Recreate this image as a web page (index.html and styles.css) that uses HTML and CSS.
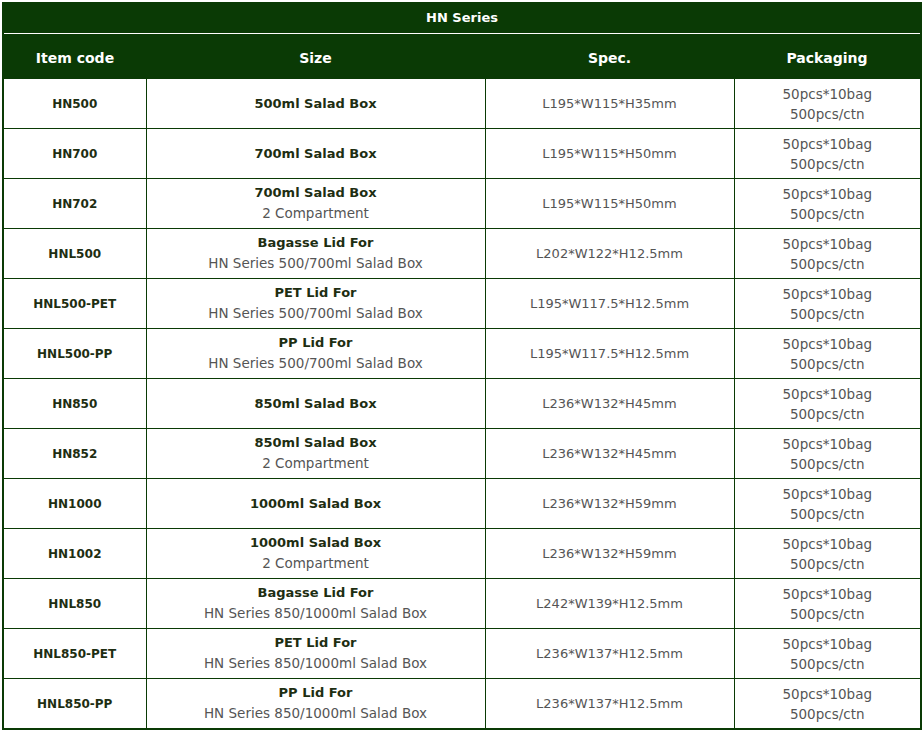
FILE: index.html
```html
<!DOCTYPE html>
<html>
<head>
<meta charset="utf-8">
<link rel="stylesheet" href="styles.css">
</head>
<body>
<table class="spec">
  <colgroup>
    <col class="c1"><col class="c2"><col class="c3"><col class="c4">
  </colgroup>
  <thead>
    <tr class="title"><th colspan="4">HN Series</th></tr>
    <tr class="head"><th>Item code</th><th>Size</th><th>Spec.</th><th>Packaging</th></tr>
  </thead>
  <tbody>
    <tr><td class="code">HN500</td><td><b>500ml Salad Box</b></td><td>L195*W115*H35mm</td><td class="pack">50pcs*10bag<br>500pcs/ctn</td></tr>
    <tr><td class="code">HN700</td><td><b>700ml Salad Box</b></td><td>L195*W115*H50mm</td><td class="pack">50pcs*10bag<br>500pcs/ctn</td></tr>
    <tr><td class="code">HN702</td><td><b>700ml Salad Box</b><br><span class="sub">2 Compartment</span></td><td>L195*W115*H50mm</td><td class="pack">50pcs*10bag<br>500pcs/ctn</td></tr>
    <tr><td class="code">HNL500</td><td><b>Bagasse Lid For</b><br><span class="sub">HN Series 500/700ml Salad Box</span></td><td>L202*W122*H12.5mm</td><td class="pack">50pcs*10bag<br>500pcs/ctn</td></tr>
    <tr><td class="code">HNL500-PET</td><td><b>PET Lid For</b><br><span class="sub">HN Series 500/700ml Salad Box</span></td><td>L195*W117.5*H12.5mm</td><td class="pack">50pcs*10bag<br>500pcs/ctn</td></tr>
    <tr><td class="code">HNL500-PP</td><td><b>PP Lid For</b><br><span class="sub">HN Series 500/700ml Salad Box</span></td><td>L195*W117.5*H12.5mm</td><td class="pack">50pcs*10bag<br>500pcs/ctn</td></tr>
    <tr><td class="code">HN850</td><td><b>850ml Salad Box</b></td><td>L236*W132*H45mm</td><td class="pack">50pcs*10bag<br>500pcs/ctn</td></tr>
    <tr><td class="code">HN852</td><td><b>850ml Salad Box</b><br><span class="sub">2 Compartment</span></td><td>L236*W132*H45mm</td><td class="pack">50pcs*10bag<br>500pcs/ctn</td></tr>
    <tr><td class="code">HN1000</td><td><b>1000ml Salad Box</b></td><td>L236*W132*H59mm</td><td class="pack">50pcs*10bag<br>500pcs/ctn</td></tr>
    <tr><td class="code">HN1002</td><td><b>1000ml Salad Box</b><br><span class="sub">2 Compartment</span></td><td>L236*W132*H59mm</td><td class="pack">50pcs*10bag<br>500pcs/ctn</td></tr>
    <tr><td class="code">HNL850</td><td><b>Bagasse Lid For</b><br><span class="sub">HN Series 850/1000ml Salad Box</span></td><td>L242*W139*H12.5mm</td><td class="pack">50pcs*10bag<br>500pcs/ctn</td></tr>
    <tr><td class="code">HNL850-PET</td><td><b>PET Lid For</b><br><span class="sub">HN Series 850/1000ml Salad Box</span></td><td>L236*W137*H12.5mm</td><td class="pack">50pcs*10bag<br>500pcs/ctn</td></tr>
    <tr><td class="code">HNL850-PP</td><td><b>PP Lid For</b><br><span class="sub">HN Series 850/1000ml Salad Box</span></td><td>L236*W137*H12.5mm</td><td class="pack">50pcs*10bag<br>500pcs/ctn</td></tr>
  </tbody>
</table>
</body>
</html>
```

FILE: styles.css
```css
html, body {
  margin: 0;
  padding: 0;
  background: #ffffff;
}
body {
  padding: 2px 0 0 2px;
  font-family: "DejaVu Sans", "Liberation Sans", sans-serif;
}
.spec {
  width: 920px;
  border-collapse: collapse;
  table-layout: fixed;
  border: 2px solid #0a3a05;
  font-size: 13px;
  color: #555555;
}
.c1 { width: 143px; }
.c2 { width: 339px; }
.c3 { width: 249px; }
.c4 { width: auto; }
.spec th, .spec td {
  text-align: center;
  vertical-align: middle;
  padding: 0;
}
.title th {
  background: #0a3a05;
  color: #ffffff;
  font-size: 13px;
  font-weight: bold;
  height: 27px;
  padding-bottom: 2px;
  border-bottom: 1px solid #ffffff;
}
.head th {
  background: #0a3a05;
  color: #ffffff;
  font-size: 14px;
  font-weight: bold;
  height: 40px;
  padding-top: 4px;
}
.spec td {
  border: 1px solid #0a3a05;
  height: 49px;
  line-height: 20px;
}
.spec td b {
  color: #1e2e12;
  font-weight: bold;
}
.spec td .sub {
  font-size: 13.5px;
}
.spec td.pack {
  font-size: 13.5px;
}
.spec td.code {
  color: #1e2e12;
  font-weight: bold;
  font-size: 12px;
}
```
